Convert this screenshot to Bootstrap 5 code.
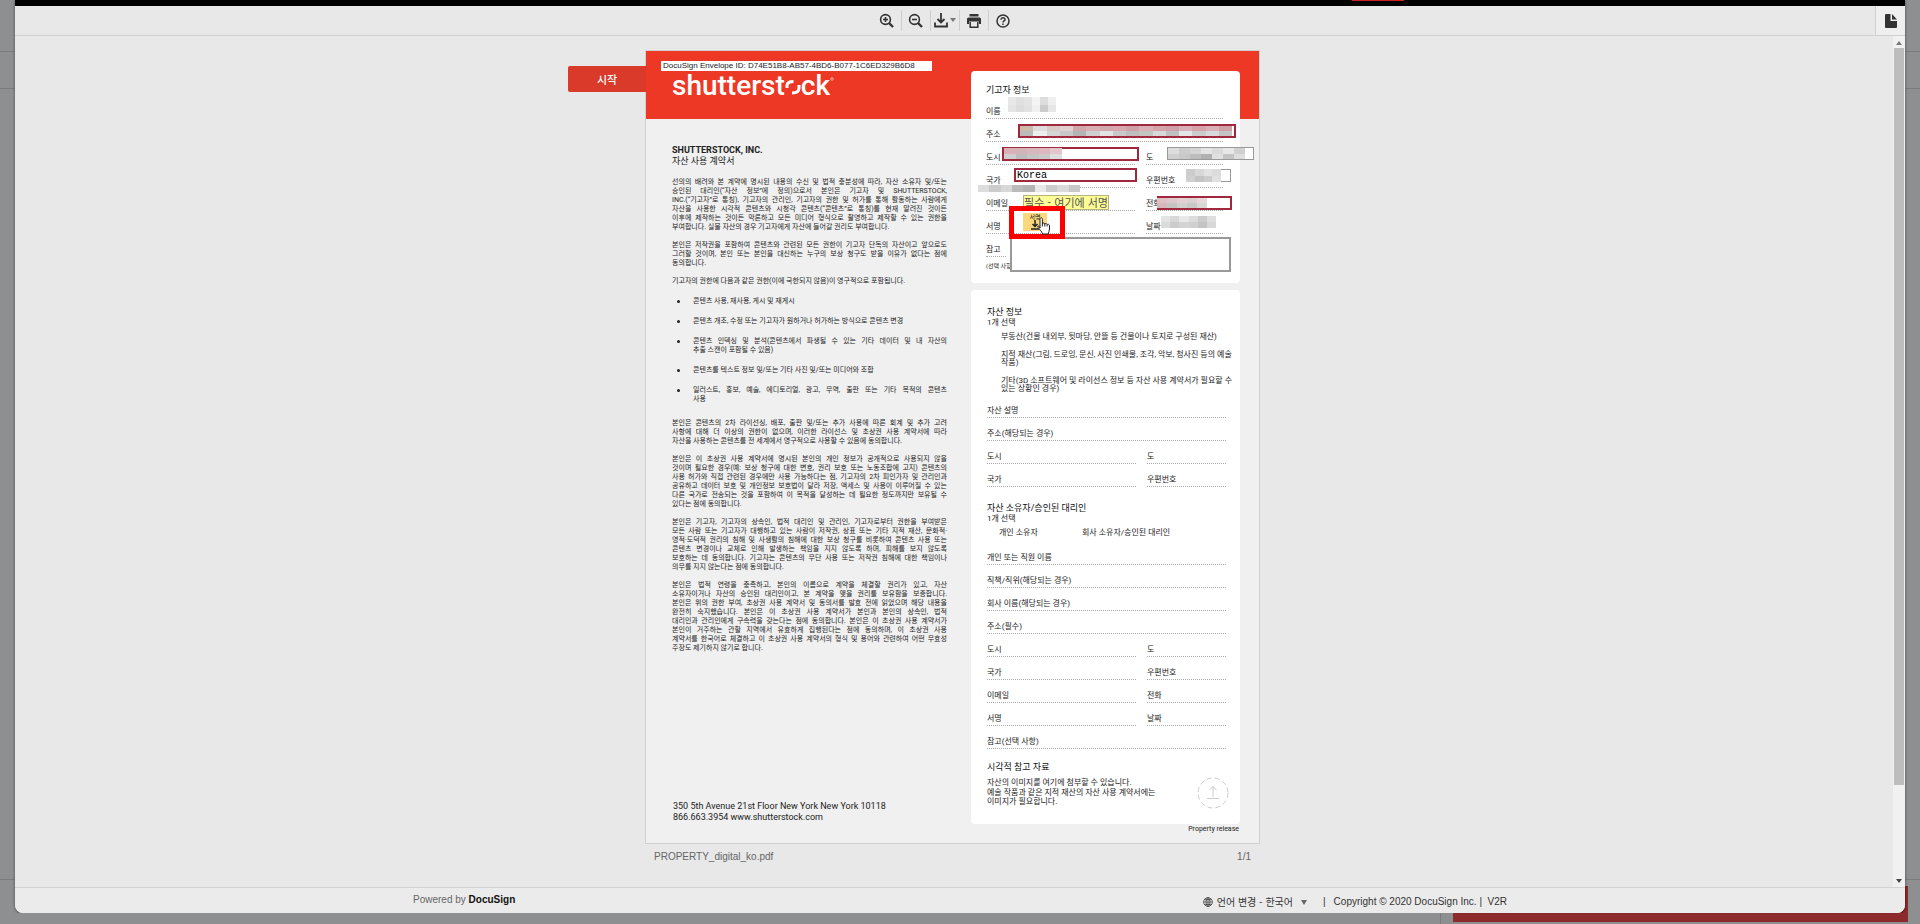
<!DOCTYPE html>
<html lang="ko">
<head>
<meta charset="utf-8">
<meta name="viewport" content="width=device-width, initial-scale=1">
<title>PROPERTY_digital_ko.pdf</title>
<link href="https://cdn.jsdelivr.net/npm/bootstrap@5.3.0/dist/css/bootstrap.min.css" rel="stylesheet">
<style>
  body { background: #8e8f91; font-family: "Liberation Sans", "Noto Sans CJK KR", sans-serif; color: #333; overflow: hidden; }
  .backdrop-line { position: absolute; height: 1px; background: #7b7c7e; left: 0; right: 0; }
  .backdrop-rule { position: absolute; width: 1px; height: 11px; bottom: 0; left: 75%; background: #7b7c7e; }
  .backdrop-button { position: absolute; right: 12px; bottom: 2px; width: 455px; height: 36px; background: #8c2a2c; }
  .viewer { position: relative; height: calc(100vh - 11px); margin: 0 15px; background: #e8e8e8; border-radius: 0 0 8px 8px; overflow: hidden; box-shadow: 0 1px 3px rgba(0,0,0,.5); }
  .topstrip { height: 6px; background: #000; }
  .topstrip i { display: block; width: 52px; height: 1px; margin-left: 1337px; background: #c22; }
  .toolbar { height: 30px; border-bottom: 1px solid #cfcfcf; }
  .tool { width: 29px; height: 21px; padding: 0; border: 0; border-right: 1px solid #cfcfcf; border-radius: 0; color: #333; display: flex; align-items: center; justify-content: center; }
  .tool:last-child { border-right: 0; }
  .pages-toggle { width: 30px; height: 29px; border-left: 1px solid #cfcfcf; border-right: 0; background: #efefef; }
  .scrollbar-track { width: 15px; padding: 5px 1px 4px 4px; background: linear-gradient(90deg, #e8e8e8 3px, #f1f1f1 3px); }
  .thumb { flex: 0 1 737px; background: #bdbdbd; }

  .doc-page { position: relative; width: 613px; min-height: 792px; margin-top: 15px; padding-bottom: 9px; color: #222; line-height: 9px; font-size: 7px;
    font-family: Roboto, "Noto Sans CJK KR", sans-serif;
    background: linear-gradient(#ee3826 68px, #f0f0f0 68px); box-shadow: 0 0 0 1px rgba(0,0,0,.1); }
  .start-flag { position: absolute; right: 100%; top: 15px; width: 78px; height: 26px; padding: 0; border: 0; border-radius: 2px 0 0 2px; background: #d93a29; color: #fff; font-size: 11px; font-weight: 500; line-height: 24px; font-family: "Noto Sans CJK KR", sans-serif; }
  .agreement { width: 300px; padding: 10px 0 11px 15px; }
  .envelope { width: 271px; height: 10px; padding-left: 2px; background: #fff; color: #222; font: 8px/10px "Liberation Sans", sans-serif; white-space: nowrap; }
  .brand { height: 47px; margin-left: 11px; color: #fff; font: 500 28px/30px Roboto, sans-serif; }
  .brand svg { margin-top: 6px; }
  .terms { width: 275px; margin: 27px 0 0 11px; }
  .terms h1 { font-size: 9px; line-height: 11px; font-weight: 700; margin: 0; }
  .terms h2 { font-size: 9px; line-height: 11px; font-weight: 400; margin: 0 0 11px; }
  .terms p { margin: 0 0 9px; }
  .terms .jl { display: block; text-align-last: justify; white-space: nowrap; }
  .terms ul { margin: 11px 0 15px; padding-left: 21px; list-style: none; display: grid; gap: 11px; }
  .terms li { position: relative; }
  .terms li::before { content: ""; position: absolute; left: -16px; top: 3px; width: 3px; height: 3px; border-radius: 50%; background: #222; }
  .address { margin: auto 0 0 12px; font-size: 9px; line-height: 11px; }

  .forms { width: 269px; margin-right: 19px; padding-top: 20px; font-size: 8px; }
  .panel { background: #fff; border-radius: 4px; padding: 0 14px 0 16px; }
  .panel-a { height: 212px; padding-top: 14px; margin-bottom: 7px; padding-right: 17px; padding-left: 15px; }
  .panel-a small { font-size: 6px; }
  .panel-b { padding-top: 16px; padding-bottom: 18px; }
  .panel h3 { font-size: 9px; line-height: 12px; font-weight: 400; margin: 0; color: #111; }
  .panel-a h3 { line-height: 11px; }
  .line-row { display: grid; grid-template-columns: 149px 1fr; column-gap: 11px; }
  .line-row > * { height: 23px; padding-bottom: 1px; display: flex; align-items: flex-end; line-height: 10px; border-bottom: 1px dotted #aaa; white-space: nowrap; }
  .line-row > :only-child { grid-column: 1 / 3; }
  .line-row > .short { width: 20px; }
  .options { line-height: 8px; }
  .release { line-height: 10px; font-size: 7px; text-align: right; padding-right: 1px; }

  .field { position: absolute; box-sizing: border-box; border: 1px solid #999; background: #fff; padding: 0 1px; border-radius: 0; color: #000; font: 10px/11px "Liberation Mono", monospace; outline: 0; resize: none; }
  .field.required { border: 2px solid #a0283e; }
  .mosaic { position: absolute; display: grid; grid-auto-rows: 1fr; overflow: hidden; }
  .hint { position: absolute; left: 377px; top: 144px; width: 86px; height: 15px; background: #fdfd96; border: 1px solid #b5b57a; font: 11px/12px "Noto Sans CJK KR", sans-serif; color: #555; text-align: center; white-space: nowrap; }
  .sign { position: absolute; left: 377px; top: 162px; width: 24px; height: 18px; border: 0; padding: 0; background: #fbd87c; color: #222; font: 6px/7px "Noto Sans CJK KR", sans-serif; display: flex; flex-direction: column; align-items: center; }
  .callout { position: absolute; left: 363px; top: 155px; width: 56px; height: 33px; border: 5px solid #f00; }
  .pointer { position: absolute; left: 391px; top: 166px; }

  .caption { width: 613px; padding: 7px 8px 0; font-size: 10px; line-height: 14px; color: #666; }
  .viewer-footer { height: 26px; border-top: 1px solid #d2d2d2; background: #ebebeb; font-size: 10px; line-height: 14px; padding-top: 3px; }
  .footer-inner { width: 1094px; max-width: 100%; }
  .lang { border: 0; background: none; padding: 0; font: 10px/14px "Noto Sans CJK KR", sans-serif; color: #333; }
  .viewer-footer a { color: #666; text-decoration: none; }
  .viewer-footer b { color: #111; }
</style>
</head>
<body>
<div class="backdrop-line" style="top:51px"></div>
<div class="backdrop-line" style="top:88px"></div>
<div class="backdrop-line" style="top:879px"></div>
<div class="backdrop-rule"></div>
<div class="backdrop-button"></div>

<div class="viewer d-flex flex-column">
  <div class="topstrip"><i></i></div>
  <header class="toolbar d-flex align-items-center">
    <div class="flex-fill d-flex justify-content-center">
      <button class="btn tool" type="button" aria-label="확대"><svg width="15" height="15" viewBox="0 0 15 15" fill="none" stroke="currentColor" stroke-width="1.6"><circle cx="6.500" cy="6.500" r="4.900"/><path d="M10 10l4 4" stroke-width="2.400"/><path d="M4 6.500h5M6.500 4v5"/></svg></button>
      <button class="btn tool" type="button" aria-label="축소"><svg width="15" height="15" viewBox="0 0 15 15" fill="none" stroke="currentColor" stroke-width="1.6"><circle cx="6.500" cy="6.500" r="4.900"/><path d="M10 10l4 4" stroke-width="2.400"/><path d="M4 6.500h5"/></svg></button>
      <button class="btn tool" type="button" aria-label="다운로드"><svg width="22" height="15" viewBox="0 0 22 15" fill="none" stroke="currentColor" stroke-width="1.800"><path d="M7 0v9M3.500 6L7 9.500 10.500 6M1 9.500v4h12v-4"/><path d="M16 5h6l-3 4z" fill="#777" stroke="none"/></svg></button>
      <button class="btn tool" type="button" aria-label="인쇄"><svg width="14" height="14" viewBox="0 0 14 14" fill="currentColor"><path d="M2.500 0h9v2.500h-9zM1.500 3.500h11A1.500 1.500 0 0 1 14 5v5h-2V7.500H2V10H0V5a1.500 1.500 0 0 1 1.500-1.500z"/><path d="M3.200 8v5.200h7.600V8" fill="none" stroke="currentColor" stroke-width="1.500"/></svg></button>
      <button class="btn tool" type="button" aria-label="도움말"><svg width="14" height="14" viewBox="0 0 14 14" fill="none" stroke="currentColor" stroke-width="1.500"><circle cx="7" cy="7" r="6"/><path d="M5 5.700C5 3 9.200 3.200 9 5.600 8.900 6.900 7 6.800 7 8.600M7 9.600v1.500"/></svg></button>
    </div>
    <button class="btn tool pages-toggle" type="button" aria-label="페이지"><svg width="12" height="14" viewBox="0 0 12 14" fill="currentColor"><path d="M1 0h4.500v7H12v6a1 1 0 0 1-1 1H1a1 1 0 0 1-1-1V1a1 1 0 0 1 1-1z"/><path d="M7 0l5 5.500H7z"/></svg></button>
  </header>

  <main class="flex-fill d-flex overflow-hidden">
    <div class="flex-fill d-flex flex-column align-items-center">
      <article class="doc-page d-flex justify-content-between">
        <button class="start-flag" type="button">시작</button>
        <section class="agreement d-flex flex-column">
          <div class="envelope">DocuSign Envelope ID: D74E51B8-AB57-4BD6-B077-1C6ED329B6D8</div>
          <div class="brand d-flex"><span>shutterst</span><svg width="16" height="18" viewBox="0 0 16 18" fill="none" stroke="#fff" stroke-width="3"><path d="M2 11V8.500C2 5.500 4 4.500 8.500 4.500"/><path d="M14 8v3c0 3.500-2 5-7 5"/></svg><span>ck</span><svg width="4" height="4" viewBox="0 0 4 4"><circle cx="2" cy="2" r="1.300" fill="none" stroke="#fbb" stroke-width=".8"/></svg></div>
          <div class="terms">
            <h1>SHUTTERSTOCK, INC.</h1>
            <h2>자산 사용 계약서</h2>
            <p><span class="jl">선의의 배려와 본 계약에 명시된 내용의 수신 및 법적 충분성에 따라, 자산 소유자 및/또는</span><span class="jl">승인된 대리인(“자산 정보”에 정의)으로서 본인은 기고자 및 SHUTTERSTOCK,</span><span class="jl">INC.(“기고자”로 통칭), 기고자의 관리인, 기고자의 권한 및 허가를 통해 활동하는 사람에게</span><span class="jl">자산을 사용한 시각적 콘텐츠와 시청각 콘텐츠(“콘텐츠”로 통칭)를 현재 알려진 것이든</span><span class="jl">이후에 제작하는 것이든 막론하고 모든 미디어 형식으로 촬영하고 제작할 수 있는 권한을</span>부여합니다. 실물 자산의 경우 기고자에게 자산에 들어갈 권리도 부여합니다.</p>
            <p><span class="jl">본인은 저작권을 포함하여 콘텐츠와 관련된 모든 권한이 기고자 단독의 자산이고 앞으로도</span><span class="jl">그러할 것이며, 본인 또는 본인을 대신하는 누구의 보상 청구도 받을 이유가 없다는 점에</span>동의합니다.</p>
            <p>기고자의 권한에 다음과 같은 권한(이에 국한되지 않음)이 영구적으로 포함됩니다.</p>
            <ul>
              <li>콘텐츠 사용, 재사용, 게시 및 재게시</li>
              <li>콘텐츠 개조, 수정 또는 기고자가 원하거나 허가하는 방식으로 콘텐츠 변경</li>
              <li><span class="jl">콘텐츠 인덱싱 및 분석(콘텐츠에서 파생될 수 있는 기타 데이터 및 내 자산의</span>추출 스캔이 포함될 수 있음)</li>
              <li>콘텐츠를 텍스트 정보 및/또는 기타 사진 및/또는 미디어와 조합</li>
              <li><span class="jl">일러스트, 홍보, 예술, 에디토리얼, 광고, 무역, 출판 또는 기타 목적의 콘텐츠</span>사용</li>
            </ul>
            <p><span class="jl">본인은 콘텐츠의 2차 라이선싱, 배포, 출판 및/또는 추가 사용에 따른 회계 및 추가 고려</span><span class="jl">사항에 대해 더 이상의 권한이 없으며, 이러한 라이선스 및 초상권 사용 계약서에 따라</span>자산을 사용하는 콘텐츠를 전 세계에서 영구적으로 사용할 수 있음에 동의합니다.</p>
            <p><span class="jl">본인은 이 초상권 사용 계약서에 명시된 본인의 개인 정보가 공개적으로 사용되지 않을</span><span class="jl">것이며 필요한 경우(예: 보상 청구에 대한 변호, 권리 보호 또는 노동조합에 고지) 콘텐츠의</span><span class="jl">사용 허가와 직접 관련된 경우에만 사용 가능하다는 점, 기고자의 2차 피인가자 및 관리인과</span><span class="jl">공유하고 데이터 보호 및 개인정보 보호법이 달라 저장, 액세스 및 사용이 이루어질 수 있는</span><span class="jl">다른 국가로 전송되는 것을 포함하여 이 목적을 달성하는 데 필요한 정도까지만 보유될 수</span>있다는 점에 동의합니다.</p>
            <p><span class="jl">본인은 기고자, 기고자의 상속인, 법적 대리인 및 관리인, 기고자로부터 권한을 부여받은</span><span class="jl">모든 사람 또는 기고자가 대행하고 있는 사람이 저작권, 상표 또는 기타 지적 재산, 문화적·</span><span class="jl">영적·도덕적 권리의 침해 및 사생활의 침해에 대한 보상 청구를 비롯하여 콘텐츠 사용 또는</span><span class="jl">콘텐츠 변경이나 교체로 인해 발생하는 책임을 지지 않도록 하며, 피해를 보지 않도록</span><span class="jl">보호하는 데 동의합니다. 기고자는 콘텐츠의 무단 사용 또는 저작권 침해에 대한 책임이나</span>의무를 지지 않는다는 점에 동의합니다.</p>
            <p><span class="jl">본인은 법적 연령을 충족하고, 본인의 이름으로 계약을 체결할 권리가 있고, 자산</span><span class="jl">소유자이거나 자산의 승인된 대리인이고, 본 계약을 맺을 권리를 보유함을 보증합니다.</span><span class="jl">본인은 위의 권한 부여, 초상권 사용 계약서 및 동의서를 발효 전에 읽었으며 해당 내용을</span><span class="jl">완전히 숙지했습니다. 본인은 이 초상권 사용 계약서가 본인과 본인의 상속인, 법적</span><span class="jl">대리인과 관리인에게 구속력을 갖는다는 점에 동의합니다. 본인은 이 초상권 사용 계약서가</span><span class="jl">본인이 거주하는 관할 지역에서 유효하게 집행된다는 점에 동의하며, 이 초상권 사용</span><span class="jl">계약서를 한국어로 체결하고 이 초상권 사용 계약서의 형식 및 용어와 관련하여 어떤 무효성</span>주장도 제기하지 않기로 합니다.</p>
          </div>
          <div class="address">350 5th Avenue 21st Floor New York New York 10118<br>866.663.3954 www.shutterstock.com</div>
        </section>

        <section class="forms">
          <div class="panel panel-a">
            <h3>기고자 정보</h3>
            <div class="line-row"><span>이름</span></div>
            <div class="line-row"><label for="f-address">주소</label></div>
            <div class="line-row"><label for="f-city">도시</label><label for="f-state">도</label></div>
            <div class="line-row"><label for="f-country">국가</label><label for="f-zip">우편번호</label></div>
            <div class="line-row"><span>이메일</span><label for="f-phone">전화</label></div>
            <div class="line-row"><span>서명</span><span>날짜</span></div>
            <div class="line-row"><label for="f-note" class="short">참고</label></div>
            <small class="d-block mt-1">(선택 사항)</small>
          </div>
          <div class="panel panel-b">
            <h3>자산 정보</h3>
            <div>1개 선택</div>
            <div class="options d-grid" style="gap:10px;margin:6px 0 2px 14px">
              <div>부동산(건물 내외부, 뒷마당, 안뜰 등 건물이나 토지로 구성된 재산)</div>
              <div class="text-nowrap">지적 재산(그림, 드로잉, 문신, 사진 인쇄물, 조각, 악보, 청사진 등의 예술<br>작품)</div>
              <div class="text-nowrap">기타(3D 소프트웨어 및 라이선스 정보 등 자산 사용 계약서가 필요할 수<br>있는 상황인 경우)</div>
            </div>
            <div class="line-row"><span>자산 설명</span></div>
            <div class="line-row"><span>주소(해당되는 경우)</span></div>
            <div class="line-row"><span>도시</span><span>도</span></div>
            <div class="line-row"><span>국가</span><span>우편번호</span></div>
            <h3 style="margin-top:15px">자산 소유자/승인된 대리인</h3>
            <div>1개 선택</div>
            <div class="options d-flex" style="margin:6px 0 5px 12px"><span style="width:83px">개인 소유자</span><span>회사 소유자/승인된 대리인</span></div>
            <div class="line-row"><span>개인 또는 직원 이름</span></div>
            <div class="line-row"><span>직책/직위(해당되는 경우)</span></div>
            <div class="line-row"><span>회사 이름(해당되는 경우)</span></div>
            <div class="line-row"><span>주소(필수)</span></div>
            <div class="line-row"><span>도시</span><span>도</span></div>
            <div class="line-row"><span>국가</span><span>우편번호</span></div>
            <div class="line-row"><span>이메일</span><span>전화</span></div>
            <div class="line-row"><span>서명</span><span>날짜</span></div>
            <div class="line-row"><span>참고(선택 사항)</span></div>
            <h3 style="margin-top:12px">시각적 참고 자료</h3>
            <div class="d-flex justify-content-between">
              <div style="margin-top:5px">자산의 이미지를 여기에 첨부할 수 있습니다.<div style="margin-top:1px">예술 작품과 같은 지적 재산의 자산 사용 계약서에는<br>이미지가 필요합니다.</div></div>
              <svg class="flex-shrink-0" style="margin:4px -3px -3px 0" width="32" height="32" viewBox="0 0 32 32" fill="none" stroke="#ccc"><circle cx="16" cy="16" r="15" stroke-dasharray="5 3"/><path d="M16 20V9.500M12.500 13L16 9.500l3.500 3.500M10 21.500h12"/></svg>
            </div>
          </div>
          <div class="release">Property release</div>
        </section>

        <div class="mosaic" data-tones="e8 e0 e4 f4 dd ef|e4 dd e2 f0 cc e6" style="left:362px;top:46px;width:48px;height:15px"></div>
        <input class="field required" id="f-address" style="left:372px;top:73px;width:218px;height:14px">
        <div class="mosaic" data-tones="cba ddd d8c8c8 e0d0d0 d0a8ac d8b0b4 d2aaae d8a8b0 d0a0a8 dab0b8 d4a4aa d0a0a8 d8b0b8 d4a4aa dab0b8 d0a0a8|bbb eee d5d5d5 c8c8c8 b4b4b4 cfcfcf e4e4e4 c9c9c9 bebebe c4c4c0 d8d8d8 c0c0c0 e6e6e6 cccccc d9d9d9 c4c4c4" style="left:374px;top:75px;width:212px;height:10px"></div>
        <input class="field required" id="f-city" style="left:356px;top:96px;width:137px;height:14px">
        <div class="mosaic" data-tones="d9b0b6 d2b4b8 d6b8bc dcb8be e2c6cc|cfcfcf bdbdbd c5c5c5 cacaca dedede" style="left:358px;top:97px;width:58px;height:11px"></div>
        <input class="field" id="f-state" style="left:521px;top:96px;width:87px;height:13px">
        <div class="mosaic" data-tones="ddd ccc d4d4d4 e4e4e4 dadada e8e8e8 d0d0d0|d0d0d0 c8c8c8 bcbcbc b0b0b0 e0e0e0 c4c4c4 dedede" style="left:522px;top:97px;width:77px;height:11px"></div>
        <input class="field required" id="f-country" value="Korea" style="left:368px;top:117px;width:123px;height:14px">
        <input class="field" id="f-zip" style="left:540px;top:118px;width:45px;height:13px">
        <div class="mosaic" data-tones="ccc d8d8d8 e2e2e2 dcdcdc|d0d0d0 c4c4c4 cccccc e0e0e0" style="left:540px;top:118px;width:35px;height:13px"></div>
        <div class="mosaic" data-tones="ddd ccc d8d8d8 bbb b4b4b4 e8e8e8 ccc dadada c8c8c8" style="left:332px;top:134px;width:102px;height:7px"></div>
        <div class="hint" role="tooltip">필수 - 여기에 서명</div>
        <input class="field required" id="f-phone" style="left:511px;top:145px;width:75px;height:14px">
        <div class="mosaic" data-tones="e0c0c4 dcc8ca e4d0d2 dcd0d2 e8d8da|d4b8bc c4c4c4 d0d0d0 c8c8c8 d8d8d8" style="left:511px;top:147px;width:50px;height:10px"></div>
        <button class="sign" type="button">서명<svg width="10" height="10" viewBox="0 0 10 10" fill="none" stroke="#222" stroke-width="1.500"><path d="M5 0v6M2.500 4L5 6.500 7.500 4M1 9h8"/></svg></button>
        <div class="mosaic" data-tones="e4e4e4 d8d8d8 e8e8e8 dcdcdc ccc dedede|dcdcdc ccc d4d4d4 d0d0d0 c4c4c4 d8d8d8" style="left:515px;top:165px;width:55px;height:12px"></div>
        <textarea class="field" id="f-note" style="left:364px;top:186px;width:221px;height:35px;border-width:2px"></textarea>
        <div class="callout"></div>
        <svg class="pointer" width="14" height="18" viewBox="0 0 14 18" fill="#fff" stroke="#222"><path d="M3 11V2.200c0-2 2.400-2 2.400 0V7c.3-1.400 2.300-1.200 2.400.2.500-1.200 2.200-.8 2.300.5.800-1 2.400-.4 2.400 1.200V12c0 2-1 3-1.300 5H5.500C5 14.500 2.500 12.500 1 10.200c-.8-1.500 1-2.200 2 .8z"/><path d="M7.800 7v2.500M10.100 8v1.500M5.400 7v2.500" fill="none"/></svg>
      </article>
      <div class="caption d-flex justify-content-between"><span>PROPERTY_digital_ko.pdf</span><span>1/1</span></div>
    </div>
    <div class="scrollbar-track d-flex flex-column align-items-center" aria-hidden="true">
      <svg width="6" height="4" viewBox="0 0 6 4"><path d="M0 4l3-4 3 4z" fill="#777"/></svg>
      <div class="thumb w-100 mb-auto" style="margin-top:3px"></div>
      <svg width="6" height="4" viewBox="0 0 6 4"><path d="M0 0l3 4 3-4z" fill="#444"/></svg>
    </div>
  </main>

  <footer class="viewer-footer">
    <div class="footer-inner mx-auto d-flex justify-content-between align-items-center">
      <a href="#">Powered by <b>DocuSign</b></a>
      <div class="d-flex align-items-center pt-1">
        <button class="lang d-flex align-items-center" type="button"><svg class="me-1" width="10" height="10" viewBox="0 0 10 10" fill="none" stroke="#333" stroke-width=".7"><circle cx="5" cy="5" r="4.400"/><ellipse cx="5" cy="5" rx="2" ry="4.400"/><path d="M.6 5h8.800M5 .6v8.800M1.300 2.600h7.400M1.300 7.400h7.400"/></svg>언어 변경 - 한국어<svg class="ms-2" width="6" height="5" viewBox="0 0 6 5"><path d="M0 0h6L3 5z" fill="#666"/></svg></button>
        <span class="ms-3">|</span><span class="ms-2">Copyright © 2020 DocuSign Inc.&nbsp;|&nbsp; V2R</span>
      </div>
    </div>
  </footer>
</div>

<script src="https://cdn.jsdelivr.net/npm/bootstrap@5.3.0/dist/js/bootstrap.bundle.min.js"></script>
<script>
  // Fill each redaction with its grid of flat tones
  document.querySelectorAll('.mosaic').forEach(function (box) {
    var rows = box.dataset.tones.split('|').map(function (r) { return r.split(' '); });
    box.style.gridTemplateColumns = 'repeat(' + rows[0].length + ', 1fr)';
    rows.flat().forEach(function (tone) {
      var cell = document.createElement('span');
      cell.style.background = '#' + (tone.length === 2 ? tone + tone + tone : tone);
      box.appendChild(cell);
    });
  });
</script>
</body>
</html>
